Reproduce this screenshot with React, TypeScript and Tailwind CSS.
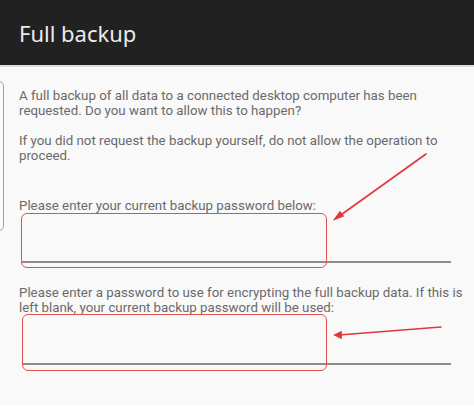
import React from "react";

const body = "font-['Roboto',sans-serif] text-[13.3px] leading-[15px] text-[#6a6a6a] whitespace-nowrap";

function PasswordField({ h }: { h: string }) {
  return <div className={`${h} ml-[3px] mr-[4px] border-b-2 border-[#8c8c8c]`} />;
}

export default function App() {
  return (
    <div className="relative w-[474px] h-[417px] bg-[#f9f9f9] overflow-hidden flex flex-col">
      {/* Action bar */}
      <div className="h-[67px] shrink-0 bg-[#212121] flex items-center pl-[19px] border-b-2 border-[#dcdcdc]">
        <span className="font-['Noto_Sans',sans-serif] text-[22px] text-[#ebebeb] leading-none mt-[1px]">Full backup</span>
      </div>

      {/* edge of the panel behind */}
      <div className="absolute left-[-12px] top-[81px] w-[16px] h-[150px] border-[1.5px] border-[#a0a0a0] rounded-[5px] bg-[#fafafa]" />

      <div className={`${body} flex-1 pl-[19px] pr-[19px] pt-[21px]`}>
        <p>
          A full backup of all data to a connected desktop computer has been
          <br />
          requested. Do you want to allow this to happen?
        </p>
        <p className="mt-[15px]">
          If you did not request the backup yourself, do not allow the operation to
          <br />
          proceed.
        </p>
        <p className="mt-[35px]">Please enter your current backup password below:</p>
        <PasswordField h="h-[50px]" />
        <p className="mt-[22px]">
          Please enter a password to use for encrypting the full backup data. If this is
          <br />
          left blank, your current backup password will be used:
        </p>
        <PasswordField h="h-[50px]" />
      </div>

      <div className="h-[12px] shrink-0 bg-white" />

      {/* annotations drawn over the screenshot */}
      <div className="absolute left-[21px] top-[213px] w-[306px] h-[55px] border-[1.5px] border-[#e3504f] rounded-[6px]" />
      <div className="absolute left-[22px] top-[314px] w-[305px] h-[57px] border-[1.5px] border-[#e3504f] rounded-[6px]" />
      <svg className="absolute left-0 top-0" width="474" height="417" viewBox="0 0 474 417">
        <g stroke="#e2353e" strokeWidth="1.6" fill="#e2353e" strokeLinecap="round">
          <line x1="426" y1="154" x2="338" y2="217" />
          <polygon points="335,219 340,212 343,216" />
          <line x1="441" y1="327" x2="339" y2="335" />
          <polygon points="335,335 341,332 341,338" />
        </g>
      </svg>
    </div>
  );
}
